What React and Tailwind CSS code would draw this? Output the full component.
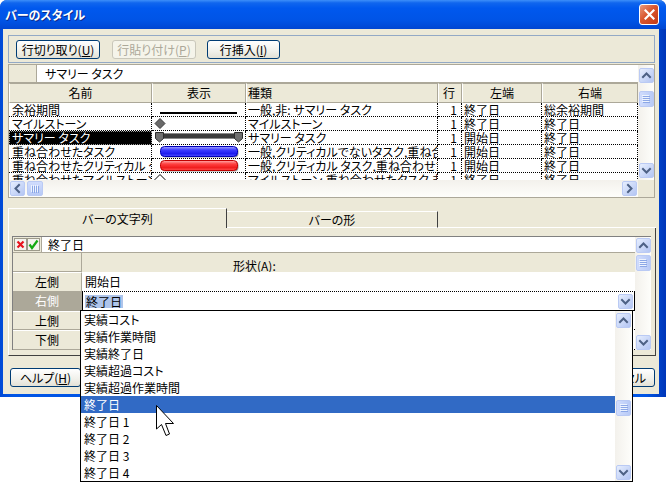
import React from "react";

function Chev({ dir }) {
  const paths = {
    up: "M3 8 L6.5 4.5 L10 8",
    down: "M3 5 L6.5 8.5 L10 5",
    left: "M8 3 L4.5 6.5 L8 10",
    right: "M5 3 L8.5 6.5 L5 10",
  };
  return (
    <svg width="13" height="13" viewBox="0 0 13 13" className="block">
      <path d={paths[dir]} fill="none" stroke="#4D6185" strokeWidth="2" strokeLinecap="square" />
    </svg>
  );
}

function SBtn({ dir, className = "" }) {
  return (
    <div className={"w-[15px] h-[15px] shrink-0 rounded-[2px] border border-[#BACAF4] bg-[linear-gradient(135deg,#E6EEFE,#B3C5F3)] flex items-center justify-center " + className}>
      <Chev dir={dir} />
    </div>
  );
}

function VThumb({ className = "" }) {
  return (
    <div className={"w-[15px] h-[16px] shrink-0 rounded-[2px] border border-[#BACAF4] bg-[linear-gradient(to_right,#D0DCFD,#B8CAF6)] flex items-center justify-center " + className}>
      <svg width="8" height="8" viewBox="0 0 8 8" className="block">
        {[0, 2, 4, 6].map((y) => (
          <g key={y}>
            <rect x="0" y={y} width="7" height="1" fill="#EEF4FE" />
            <rect x="1" y={y + 1} width="7" height="1" fill="#8CA7E6" />
          </g>
        ))}
      </svg>
    </div>
  );
}

function HThumb({ className = "" }) {
  return (
    <div className={"w-[16px] h-[15px] shrink-0 rounded-[2px] border border-[#BACAF4] bg-[linear-gradient(to_bottom,#D0DCFD,#B8CAF6)] flex items-center justify-center " + className}>
      <svg width="8" height="8" viewBox="0 0 8 8" className="block">
        {[0, 2, 4, 6].map((x) => (
          <g key={x}>
            <rect x={x} y="0" width="1" height="7" fill="#EEF4FE" />
            <rect x={x + 1} y="1" width="1" height="7" fill="#8CA7E6" />
          </g>
        ))}
      </svg>
    </div>
  );
}

function XPBtn({ children, className = "", disabled = false }) {
  return (
    <div
      className={
        "h-[19px] shrink-0 rounded-[3px] border flex items-center justify-center " +
        (disabled
          ? "border-[#C9C7BA] bg-[#F5F4EA] text-[#ACA899] "
          : "border-[#003C74] bg-[linear-gradient(to_bottom,#FFFFFF,#F0F0EA_60%,#E3E1D6)] text-black ") +
        className
      }
    >
      {children}
    </div>
  );
}

const U = ({ children }) => <span className="underline underline-offset-[1px]">{children}</span>;

const cols = "grid grid-cols-[143px_94px_192px_24px_80px_96px]";

function Disp({ kind }) {
  if (kind === "line")
    return (
      <svg width="93" height="13" className="block">
        <rect x="8" y="9" width="77" height="2" fill="#000" />
      </svg>
    );
  if (kind === "ms")
    return (
      <svg width="93" height="13" className="block">
        <polygon points="8,1.5 13,6.5 8,11.5 3,6.5" fill="#6A6A6A" stroke="#3A3A3A" strokeWidth="1" />
      </svg>
    );
  if (kind === "sum")
    return (
      <svg width="93" height="13" className="block">
        <rect x="10" y="2.5" width="74" height="5" fill="#3C3C3C" stroke="#8A8A8A" strokeWidth="1" />
        <polygon points="3.5,1.5 11.5,1.5 11.5,7.5 7.5,11 3.5,7.5" fill="#707070" stroke="#2E2E2E" strokeWidth="1" />
        <polygon points="82.5,1.5 90.5,1.5 90.5,7.5 86.5,11 82.5,7.5" fill="#707070" stroke="#2E2E2E" strokeWidth="1" />
      </svg>
    );
  if (kind === "blue" || kind === "red") {
    const id = kind + "g";
    const c =
      kind === "blue"
        ? ["#A8A8FF", "#3C3CFF", "#1E1EF0", "#4A4AFF", "#0000B8"]
        : ["#FFB0B0", "#FF4040", "#F01E1E", "#FF5050", "#C00000"];
    return (
      <svg width="93" height="13" className="block">
        <defs>
          <linearGradient id={id} x1="0" y1="0" x2="0" y2="1">
            <stop offset="0" stopColor={c[0]} />
            <stop offset="0.35" stopColor={c[1]} />
            <stop offset="0.7" stopColor={c[2]} />
            <stop offset="1" stopColor={c[3]} />
          </linearGradient>
        </defs>
        <rect x="9.5" y="2.5" width="77" height="10" rx="4" fill="#9A9A9A" />
        <rect x="8.5" y="1.5" width="77" height="10" rx="4" fill={`url(#${id})`} stroke={c[4]} strokeWidth="1" />
      </svg>
    );
  }
  if (kind === "hms")
    return (
      <svg width="93" height="13" className="block">
        <polygon points="8,1.5 13,6.5 8,11.5 3,6.5" fill="#fff" stroke="#000" strokeWidth="1" />
      </svg>
    );
  return null;
}

const rows = [
  ["余裕期間", "line", "一般,非: サマリー タスク", "1", "終了日", "総余裕期間"],
  ["マイルストーン", "ms", "マイルストーン", "1", "終了日", "終了日"],
  ["サマリー タスク", "sum", "サマリー タスク", "1", "開始日", "終了日"],
  ["重ね合わせたタスク", "blue", "一般,クリティカルでないタスク,重ね合わせたタスク", "1", "開始日", "終了日"],
  ["重ね合わせたクリティカル タスク", "red", "一般,クリティカル タスク,重ね合わせたタスク", "1", "開始日", "終了日"],
  ["重ね合わせたマイルストーン", "hms", "マイルストーン,重ね合わせたタスク,非: サマリー タスク", "1", "終了日", "終了日"],
];

const cell = "h-[14px] border-r border-b border-dotted border-black overflow-hidden whitespace-nowrap leading-[13px]";
const hcell = "h-[20px] bg-[#ECE9D8] border-r border-b border-t border-[#ACA899] border-l border-l-white flex items-center overflow-hidden whitespace-nowrap";

const listItems = ["実績コスト", "実績作業時間", "実績終了日", "実績超過コスト", "実績超過作業時間", "終了日", "終了日 1", "終了日 2", "終了日 3", "終了日 4"];

export default function App() {
  return (
    <div className="relative w-[666px] h-[484px] bg-white overflow-hidden font-['Noto_Sans_CJK_JP','Noto_Sans_CJK_SC',sans-serif] [font-feature-settings:'palt'] text-[12px] leading-[14px] text-black">
      {/* dialog */}
      <div className="w-[666px] rounded-t-[7px] bg-[linear-gradient(to_right,#0049D6,#0055E5_2%,#0055E5_97%,#0036B8)] flex flex-col">
        {/* title bar */}
        <div className="h-[29px] rounded-t-[7px] bg-[linear-gradient(to_bottom,#3D8FF9_0%,#1066EE_10%,#0058EE_28%,#0054E6_70%,#0046D2_100%)] flex items-center justify-between pl-[5px] pr-[7px]">
          <span className="text-white font-bold text-[12px] leading-[16px] [text-shadow:1px_1px_0_#0B2A8C]">バーのスタイル</span>
          <div className="w-[20px] h-[21px] rounded-[3px] border border-white bg-[linear-gradient(135deg,#E99A7E,#D9562F_45%,#C23A17)] flex items-center justify-center">
            <svg width="11" height="11" viewBox="0 0 11 11" className="block">
              <path d="M1.5 1.5 L9.5 9.5 M9.5 1.5 L1.5 9.5" stroke="#fff" strokeWidth="2.2" strokeLinecap="square" />
            </svg>
          </div>
        </div>

        <div className="pl-[3px] pr-[7px] pb-[3px]">
          <div className="w-[656px] bg-[#ECE9D8] flex flex-col pb-[7px]">
            {/* toolbar group */}
            <div className="mt-[6px] ml-[5px] w-[647px] h-[28px] border border-[#93A9C5] flex items-start pt-[4px] pl-[7px]">
              <XPBtn className="w-[84px]">
                行切り取り(<U>U</U>)
              </XPBtn>
              <XPBtn disabled className="w-[84px] ml-[12px]">
                行貼り付け(<U>P</U>)
              </XPBtn>
              <XPBtn className="w-[73px] ml-[11px]">
                行挿入(<U>I</U>)
              </XPBtn>
            </div>

            {/* table box */}
            <div className="mt-[1px] ml-[5px] w-[647px] h-[134px] border border-[#ACA899] flex bg-[#ECE9D8]">
              <div className="w-[629px] flex flex-col">
                <div className="h-[18px] flex">
                  <div className="w-[28px] bg-[#ECE9D8] border-r border-b border-[#ACA899]" />
                  <div className="flex-1 bg-white border-b border-[#ACA899] pl-[8px] flex items-center whitespace-nowrap">サマリー タスク</div>
                </div>
                <div className={cols}>
                  <div className={hcell + " justify-center"}>名前</div>
                  <div className={hcell + " justify-center"}>表示</div>
                  <div className={hcell + " pl-[1px]"}>種類</div>
                  <div className={hcell + " pl-[4px]"}>行</div>
                  <div className={hcell + " justify-center"}>左端</div>
                  <div className={hcell + " justify-center"}>右端</div>
                </div>
                <div className="h-[77px] overflow-hidden bg-white">
                  {rows.map((r, i) => (
                    <div key={i} className={cols}>
                      <div className={cell + " pl-[3px] " + (i === 2 ? "bg-black text-white outline outline-1 outline-dotted outline-[#9A9A9A] -outline-offset-1" : "")}>{r[0]}</div>
                      <div className={cell}>
                        <Disp kind={r[1]} />
                      </div>
                      <div className={cell + " pl-[2px]"}>{r[2]}</div>
                      <div className={cell + " text-right pr-[4px]"}>{r[3]}</div>
                      <div className={cell + " pl-[2px]"}>{r[4]}</div>
                      <div className={cell + " pl-[2px]"}>{r[5]}</div>
                    </div>
                  ))}
                </div>
                <div className="h-[17px] flex items-center bg-[linear-gradient(to_bottom,#F3F1EC,#FEFEFB)]">
                  <SBtn dir="left" className="ml-[1px]" />
                  <HThumb className="ml-[2px]" />
                  <SBtn dir="right" className="ml-auto mr-[1px]" />
                </div>
              </div>
              <div className="w-[16px] flex flex-col">
                <div className="h-[115px] flex flex-col items-center bg-[linear-gradient(to_right,#F3F1EC,#FEFEFB)]">
                  <SBtn dir="up" className="mt-[3px]" />
                  <VThumb className="mt-[8px]" />
                  <SBtn dir="down" className="mt-auto mb-[2px]" />
                </div>
                <div className="flex-1 bg-[#ECE9D8]" />
              </div>
            </div>

            {/* tabs */}
            <div className="mt-[10px] ml-[5px] w-[648px] h-[20px] flex items-end">
              <div className="w-[219px] h-[20px] border-t border-l border-r border-t-white border-l-white border-r-[#404040] flex items-center justify-center">バーの文字列</div>
              <div className="w-[211px] h-[17px] border-t border-r border-b border-t-white border-r-[#404040] border-b-white flex items-center justify-center">バーの形</div>
              <div className="flex-1 h-[1px] bg-white" />
            </div>

            {/* panel */}
            <div className="ml-[5px] w-[648px] h-[128px] border-l border-r border-b border-l-white border-r-[#404040] border-b-[#404040]">
              <div className="ml-[3px] mt-[8px] w-[639px] border-l border-t border-[#808080] flex">
                <div className="w-[622px] flex flex-col">
                  {/* edit row */}
                  <div className="h-[16px] flex">
                    <div className="w-[29px] bg-[#ECE9D8] border-r border-b border-[#ACA899] flex items-center pl-[1px]">
                      <div className="w-[13px] h-[13px] border border-[#9D9A8A] bg-[#F4F3EE] flex items-center justify-center">
                        <svg width="9" height="9" viewBox="0 0 9 9" className="block">
                          <path d="M1.5 1.5 L7.5 7.5 M7.5 1.5 L1.5 7.5" stroke="#E8141E" strokeWidth="2.2" />
                        </svg>
                      </div>
                      <div className="w-[13px] h-[13px] border border-[#9D9A8A] bg-[#F4F3EE] flex items-center justify-center">
                        <svg width="11" height="11" viewBox="0 0 11 11" className="block">
                          <path d="M1.5 5.5 L4 9 L9.5 1.5" fill="none" stroke="#14A914" strokeWidth="2.2" />
                        </svg>
                      </div>
                    </div>
                    <div className="flex-1 bg-white border-b border-[#ACA899] pl-[6px] flex items-center">終了日</div>
                  </div>
                  {/* header */}
                  <div className="h-[19px] flex">
                    <div className="w-[69px] bg-[#ECE9D8] border-r border-b border-[#ACA899]" />
                    <div className="flex-1 bg-[#ECE9D8] flex items-end pl-[151px] leading-[12px]">
                      形状(<U>A</U>):
                    </div>
                  </div>
                  {/* rows */}
                  <div className="h-[20px] flex">
                    <div className="w-[69px] bg-[#ECE9D8] border-t border-t-white border-r border-b border-[#ACA899] flex items-center justify-center">左側</div>
                    <div className="flex-1 bg-white border-b border-dotted border-black pl-[3px] flex items-center">開始日</div>
                  </div>
                  <div className="h-[19px] flex">
                    <div className="w-[69px] bg-[#ACA899] text-white border-r border-b border-[#ACA899] flex items-center justify-center">右側</div>
                    <div className="flex-1 bg-white">
                      <div className="h-full w-[553px] border-l border-r border-b border-black flex items-center pl-[2px]">
                        <span className="bg-[#AEC4EA] px-[1px] leading-[13px]">終了日</span>
                        <SBtn dir="down" className="ml-auto mr-[1px]" />
                      </div>
                    </div>
                  </div>
                  <div className="h-[19px] flex">
                    <div className="w-[69px] bg-[#ECE9D8] border-t border-t-white border-r border-b border-[#ACA899] flex items-center justify-center">上側</div>
                    <div className="flex-1 bg-white border-b border-dotted border-black" />
                  </div>
                  <div className="h-[20px] flex">
                    <div className="w-[69px] bg-[#ECE9D8] border-t border-t-white border-r border-b border-[#ACA899] flex items-center justify-center">下側</div>
                    <div className="flex-1 bg-white border-b border-dotted border-black" />
                  </div>
                </div>
                <div className="w-[16px] flex flex-col items-center bg-[linear-gradient(to_right,#F3F1EC,#FEFEFB)]">
                  <SBtn dir="up" className="mt-[1px]" />
                  <VThumb className="mt-[2px]" />
                  <SBtn dir="down" className="mt-auto mb-[0px]" />
                </div>
              </div>
            </div>

            {/* buttons */}
            <div className="mt-[12px] h-[19px] flex">
              <XPBtn className="ml-[7px] w-[71px]">
                ヘルプ(<U>H</U>)
              </XPBtn>
              <XPBtn className="ml-auto w-[72px]">OK</XPBtn>
              <XPBtn className="ml-[6px] mr-[4px] w-[72px]">キャンセル</XPBtn>
            </div>
          </div>
        </div>
      </div>

      {/* dropdown list */}
      <div className="absolute left-[80px] top-[310px] w-[553px] h-[172px] border border-black bg-white flex">
        <div className="flex-1 flex flex-col">
          {listItems.map((t, i) => (
            <div key={i} className={"h-[17px] pl-[3px] flex items-center whitespace-nowrap " + (i === 5 ? "bg-[#316AC5] text-white" : "")}>
              {t}
            </div>
          ))}
        </div>
        <div className="w-[17px] flex flex-col items-center bg-[linear-gradient(to_right,#F3F1EC,#FEFEFB)]">
          <SBtn dir="up" className="mt-[2px]" />
          <VThumb className="mt-[72px]" />
          <SBtn dir="down" className="mt-auto mb-[1px]" />
        </div>
      </div>

      {/* mouse cursor */}
      <svg width="20" height="33" viewBox="0 0 20 33" className="absolute left-[156px] top-[405px]">
        <path d="M0.5 0.5 L0.5 24 L5.5 19.5 L10 30.5 L13.5 29 L9.5 18.5 L17.5 18.5 Z" fill="#fff" stroke="#000" strokeWidth="1" strokeLinejoin="miter" />
      </svg>
    </div>
  );
}
